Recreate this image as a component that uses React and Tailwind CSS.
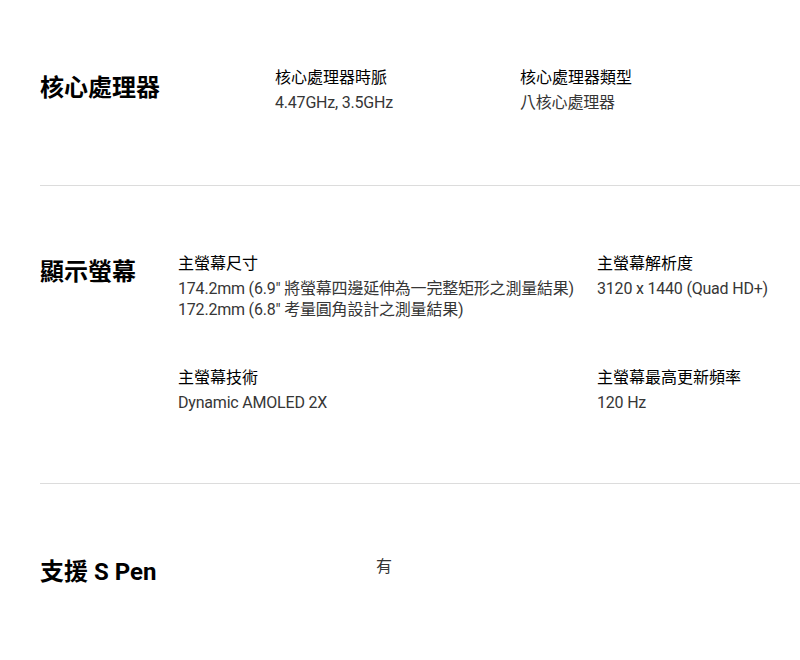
export default function App() {
  const font = { fontFamily: 'Roboto, "Noto Sans CJK TC", sans-serif' };
  const Label = ({ children }) => (
    <div className="text-[16px] leading-[24px] text-black">{children}</div>
  );
  const Value = ({ children }) => (
    <div className="mt-[2px] text-[16px] leading-[21px] text-[#363636] tracking-[-0.2px]">{children}</div>
  );
  const Title = ({ children }) => (
    <div className="text-[24px] leading-[32px] font-bold text-black">{children}</div>
  );
  return (
    <div className="w-[800px] h-[660px] bg-white overflow-hidden" style={font}>
      <div className="ml-[40px]">
        <div className="flex pt-[66px] pb-[72px] border-b border-[#dcdcdc]">
          <div className="w-[235px] pt-[6px]"><Title>核心處理器</Title></div>
          <div className="w-[245px]">
            <Label>核心處理器時脈</Label>
            <Value>4.47GHz, 3.5GHz</Value>
          </div>
          <div>
            <Label>核心處理器類型</Label>
            <Value>八核心處理器</Value>
          </div>
        </div>
        <div className="flex pt-[66px] pb-[70px] border-b border-[#dcdcdc]">
          <div className="w-[138px] pt-[4px]"><Title>顯示螢幕</Title></div>
          <div className="flex-1 grid grid-cols-[419px_1fr] gap-y-[46px]">
            <div>
              <Label>主螢幕尺寸</Label>
              <Value>
                174.2mm (6.9" 將螢幕四邊延伸為一完整矩形之測量結果)<br />
                172.2mm (6.8" 考量圓角設計之測量結果)
              </Value>
            </div>
            <div>
              <Label>主螢幕解析度</Label>
              <Value>3120 x 1440 (Quad HD+)</Value>
            </div>
            <div>
              <Label>主螢幕技術</Label>
              <Value>Dynamic AMOLED 2X</Value>
            </div>
            <div>
              <Label>主螢幕最高更新頻率</Label>
              <Value>120 Hz</Value>
            </div>
          </div>
        </div>
        <div className="flex pt-[71px]">
          <div className="w-[336px] pt-[1px]"><Title>支援 S Pen</Title></div>
          <div className="text-[16px] leading-[24px] text-[#363636]">有</div>
        </div>
      </div>
    </div>
  );
}
